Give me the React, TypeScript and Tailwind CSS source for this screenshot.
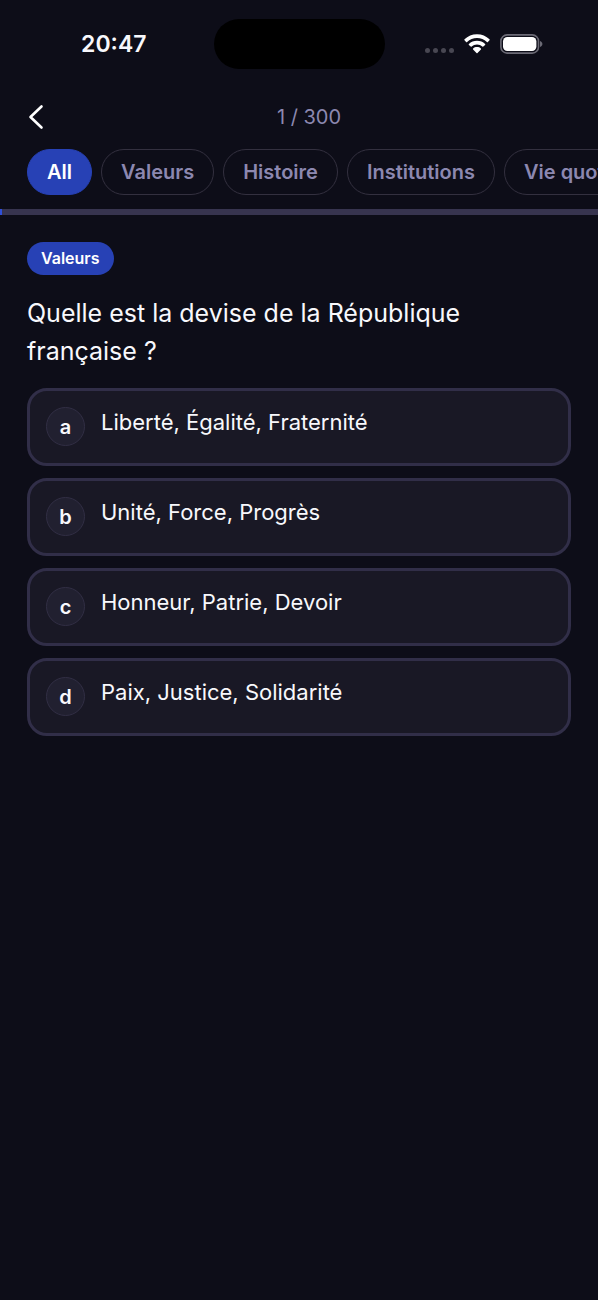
import React, { useState } from 'react';

type Answer = { id: string; text: string };

const categories = ['All', 'Valeurs', 'Histoire', 'Institutions', 'Vie quotidienne'];

const question = {
  index: 1,
  total: 300,
  category: 'Valeurs',
  title: 'Quelle est la devise de la République française ?',
};

const answers: Answer[] = [
  { id: 'a', text: 'Liberté, Égalité, Fraternité' },
  { id: 'b', text: 'Unité, Force, Progrès' },
  { id: 'c', text: 'Honneur, Patrie, Devoir' },
  { id: 'd', text: 'Paix, Justice, Solidarité' },
];

function WifiIcon() {
  return (
    <svg width="26" height="20" viewBox="0 0 26 20" fill="white" aria-hidden="true">
      <path d="M13 0.2C8.1 0.2 3.8 2.1 0.5 5.3c-.3.3-.3.7 0 1l1.6 1.6c.3.3.7.3 1 0C5.8 5.3 9.2 3.9 13 3.9s7.2 1.4 9.9 4c.3.3.7.3 1 0l1.6-1.6c.3-.3.3-.7 0-1C22.2 2.1 17.9.2 13 .2z" />
      <path d="M13 6.7c-3.1 0-6 1.2-8.1 3.2-.3.3-.3.7 0 1l1.8 1.7c.3.3.7.3 1 0 1.4-1.3 3.2-2.1 5.3-2.1s3.9.8 5.3 2.1c.3.3.7.3 1 0l1.8-1.7c.3-.3.3-.7 0-1C19 7.9 16.1 6.7 13 6.7z" />
      <path d="M13 13c-1.5 0-2.8.5-3.9 1.4-.3.3-.3.7 0 1l3.4 3.6c.3.3.7.3 1 0l3.4-3.6c.3-.3.3-.7 0-1-1.1-.9-2.4-1.4-3.9-1.4z" />
    </svg>
  );
}

function BatteryIcon() {
  return (
    <svg width="43" height="20" viewBox="0 0 43 20" aria-hidden="true">
      <rect x="0.9" y="0.9" width="37.6" height="18.2" rx="6.2" fill="none" stroke="#6b6a75" strokeWidth="1.6" />
      <rect x="3" y="3" width="33.4" height="14" rx="4.4" fill="white" />
      <path d="M40 7c1.5.5 2.4 1.6 2.4 3s-.9 2.5-2.4 3z" fill="#6b6a75" />
    </svg>
  );
}

function StatusBar() {
  return (
    <div className="grid grid-cols-[1fr_auto_1fr] items-center pt-[19px]">
      <span className="pl-3.5 text-center text-[23px] font-semibold leading-7">20:47</span>
      <div className="h-[50px] w-[171px] rounded-full bg-black" />
      <div className="flex items-center justify-center gap-[10px] pr-3.5">
        <div className="flex gap-[3px] pt-3">
          {[0, 1, 2, 3].map(dot => (
            <span key={dot} className="size-[5px] rounded-full bg-[#484752]" />
          ))}
        </div>
        <WifiIcon />
        <BatteryIcon />
      </div>
    </div>
  );
}

export default function App() {
  const [category, setCategory] = useState('All');
  const [selected, setSelected] = useState<string | null>(null);

  return (
    <div className="min-h-screen overflow-x-hidden bg-[#0d0d18] font-[Inter,'Liberation_Sans',sans-serif] text-[#f8f8fc]">
      <StatusBar />

      {/* Header */}
      <header className="grid grid-cols-[1fr_auto_1fr] items-center px-7 pt-[34px]">
        <button aria-label="Retour" className="w-8">
          <svg width="16" height="26" viewBox="0 0 16 26" fill="none" aria-hidden="true">
            <path d="M13.5 2.5L2.5 13l11 10.5" stroke="white" strokeWidth="2.6" strokeLinecap="round" strokeLinejoin="round" />
          </svg>
        </button>
        <span className="pl-5 text-xl text-[#8c88b0]">
          {question.index} / {question.total}
        </span>
      </header>

      {/* Categories */}
      <nav className="flex gap-[9px] overflow-x-auto px-[27px] pt-[18px] pb-[14px] [scrollbar-width:none]">
        {categories.map(name => (
          <button
            key={name}
            onClick={() => setCategory(name)}
            className={`shrink-0 rounded-full border px-[19px] py-2 text-xl font-semibold ${
              category === name
                ? 'border-[#2741b5] bg-[#2741b5] text-white'
                : 'border-[#33303f] text-[#8c88b0]'
            }`}
          >
            {name}
          </button>
        ))}
      </nav>

      {/* Progress */}
      <div className="h-[6px] bg-[#37344f]">
        <div className="h-full bg-[#2f4fd8]" style={{ width: `${(question.index / question.total) * 100}%` }} />
      </div>

      <main className="px-[27px] pt-[27px]">
        <span className="inline-block rounded-full bg-[#2741b5] px-[14px] py-1 text-base font-semibold leading-[25px] text-white">
          {question.category}
        </span>
        <h1 className="mt-[19px] text-[25px] leading-[38px]">{question.title}</h1>

        <div className="mt-[18px] flex flex-col gap-3">
          {answers.map(answer => (
            <button
              key={answer.id}
              onClick={() => setSelected(answer.id)}
              className={`flex min-h-[78px] items-start gap-4 rounded-[20px] border-[3px] bg-[#191825] p-4 text-left ${
                selected === answer.id ? 'border-[#2f4fd8]' : 'border-[#312e48]'
              }`}
            >
              <span className="flex size-[39px] shrink-0 items-center justify-center rounded-full border border-[#312e44] bg-[#212030] text-xl font-semibold">
                {answer.id}
              </span>
              <span className="text-[22px] leading-[30px]">{answer.text}</span>
            </button>
          ))}
        </div>
      </main>
    </div>
  );
}
